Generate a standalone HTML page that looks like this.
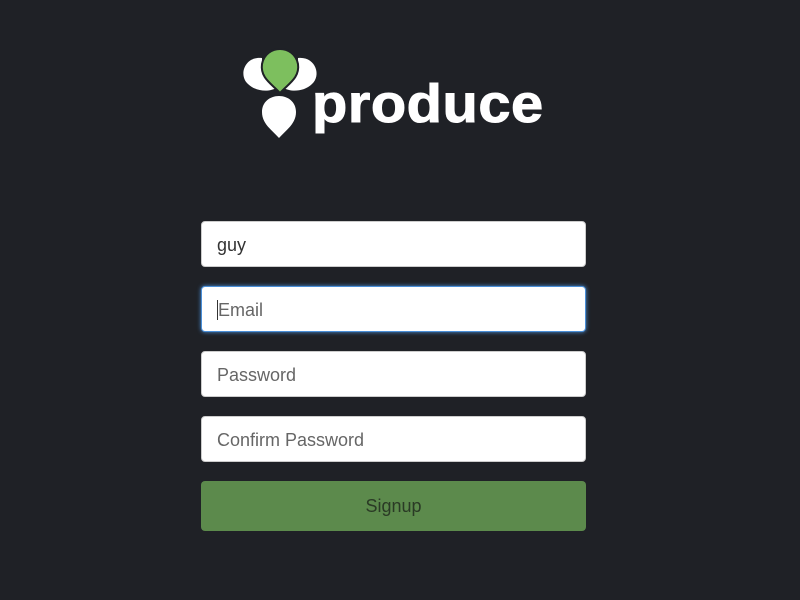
<!DOCTYPE html>
<html><head><style>
html,body{margin:0;padding:0;background:#1f2126;width:800px;height:600px;overflow:hidden;font-family:"Liberation Sans",sans-serif}
.in{position:absolute;left:201px;background:#fff;border:1px solid #ccc;border-radius:4px;font-size:18px;color:#666;line-height:46px;padding-left:15px;box-sizing:border-box;width:385px;height:46px}
.logo{position:absolute;left:312px;top:77px;font-size:54px;font-weight:bold;color:#fff;letter-spacing:0.5px;line-height:1;transform:scaleX(1.07);transform-origin:left top;-webkit-text-stroke:1px #fff}
.btn{position:absolute;left:201px;top:481px;width:385px;height:50px;background:#5c8a4c;border-radius:4px;text-align:center;line-height:50px;font-size:18px;color:#2a3a25}
</style></head><body>
<svg width="800" height="160" style="position:absolute;left:0;top:0">
<path d="M262 58 C245 56 238 75 248 84 C256 92 270 92 276 88 C268 80 262 70 262 58Z" fill="#fff"/>
<path d="M298 58 C315 56 322 75 312 84 C304 92 290 92 284 88 C292 80 298 70 298 58Z" fill="#fff"/>
<path d="M280 93 C272 84 260 78 262 64 C264 54 272 49 280 49 C288 49 296 54 298 64 C300 78 288 84 280 93Z" fill="#7dbf5e" stroke="#1f2126" stroke-width="2"/>
<path d="M279 138 C272 130 262 124 262 112 C262 102 270 96 279 96 C288 96 296 102 296 112 C296 124 286 130 279 138Z" fill="#fff"/>
</svg>
<div class="logo">produce</div>
<div class="in" style="top:221px;color:#333">guy</div>
<div class="in" style="top:286px;border:1px solid #4a8fd8;box-shadow:0 0 4px #4a8fd8"><span style="border-left:1px solid #333"></span>Email</div>
<div class="in" style="top:351px">Password</div>
<div class="in" style="top:416px">Confirm Password</div>
<div class="btn">Signup</div>
</body></html>
